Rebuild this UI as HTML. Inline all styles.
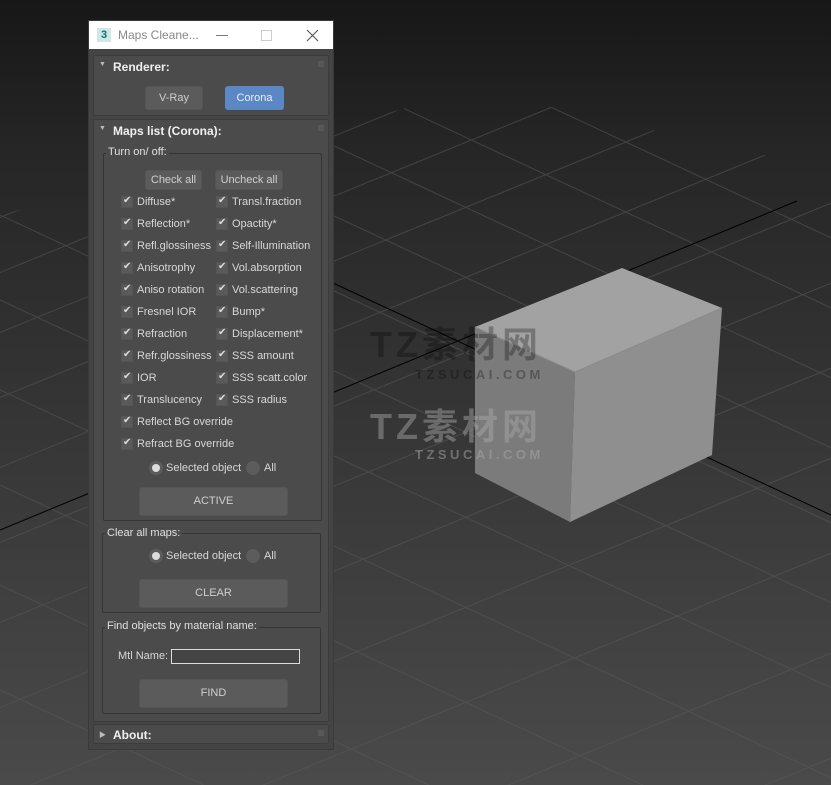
<!DOCTYPE html>
<html style="overflow:hidden"><head><meta charset="utf-8"><style>
*{margin:0;padding:0;box-sizing:border-box}
html,body{width:831px;height:785px;overflow:hidden}
body{position:relative;font-family:"Liberation Sans","Noto Sans CJK SC",sans-serif;font-size:11px;color:#d8d8d8;background:linear-gradient(#171717 0,#262626 150px,#3a3a3a 500px,#4a4a4a 785px)}
.a{position:absolute}
.win{left:88px;top:20px;width:246px;height:730px;background:#444;border:1px solid #3a3a3a}
.title{left:0;top:0;width:244px;height:28px;background:#fff;color:#888;font-size:12px}
.ro{background:#4b4b4b;border:1px solid #3c3c3c;border-radius:2px}
.hd{font-weight:bold;color:#f0f0f0;font-size:12px}
.tri{font-size:7px;color:#bbb}
.dots{width:6px;height:6px;background-image:radial-gradient(#777 0.7px,transparent 0.8px);background-size:2px 2px;}
.grp{border:1px solid #353535;border-radius:2px}
.gl{background:#4b4b4b;padding:0 2px;color:#e0e0e0}
.btn{background:#5b5b5b;border-radius:3px;text-align:center;color:#cfcfcf;border:1px solid #555}
.cb{width:12px;height:12px;background:#5a5a5a;border:1px solid #555}
.cb:after{content:"✔";position:absolute;left:1px;top:-2px;font-size:10px;color:#ddd}
.rad{width:14px;height:14px;border-radius:50%;background:#5c5c5c}
.rad.on:after{content:"";position:absolute;left:3px;top:3px;width:8px;height:8px;border-radius:50%;background:#ddd}
.wm{font-weight:bold;font-size:36px;letter-spacing:4px;white-space:nowrap}
.wm2{font-weight:bold;font-size:13px;letter-spacing:3.5px;white-space:nowrap}
</style></head><body>
<svg class="a" style="left:0;top:0" width="831" height="785">
<defs><clipPath id="c"><polygon points="0,215 475,90 831,170 831,785 0,785"/></clipPath></defs>
<g clip-path="url(#c)" stroke="#5a5a5a" stroke-width="1" opacity="0.55">
<line x1="-300" y1="290" x2="900" y2="-200"/><line x1="-300" y1="340" x2="900" y2="-150"/><line x1="-300" y1="395" x2="900" y2="-95"/><line x1="-300" y1="455" x2="900" y2="-35"/><line x1="-300" y1="520" x2="900" y2="30"/><line x1="-300" y1="590" x2="900" y2="100"/><line x1="-300" y1="665" x2="900" y2="175"/><line x1="-300" y1="745" x2="900" y2="255"/><line x1="-300" y1="830" x2="900" y2="340"/><line x1="-300" y1="920" x2="900" y2="430"/><line x1="-300" y1="1015" x2="900" y2="525"/><line x1="-300" y1="1115" x2="900" y2="625"/><line x1="-300" y1="1220" x2="900" y2="730"/>
<line x1="0" y1="-150" x2="900" y2="270"/><line x1="0" y1="-80" x2="900" y2="340"/><line x1="0" y1="-10" x2="900" y2="410"/><line x1="0" y1="60" x2="900" y2="480"/><line x1="0" y1="135" x2="900" y2="555"/><line x1="0" y1="215" x2="900" y2="635"/><line x1="0" y1="300" x2="900" y2="720"/><line x1="0" y1="390" x2="900" y2="810"/><line x1="0" y1="485" x2="900" y2="905"/><line x1="0" y1="585" x2="900" y2="1005"/><line x1="0" y1="690" x2="900" y2="1110"/><line x1="0" y1="800" x2="900" y2="1220"/>
</g>
<line x1="0" y1="530" x2="797" y2="201" stroke="#000" stroke-width="1"/>
<line x1="333" y1="283" x2="831" y2="515" stroke="#000" stroke-width="1"/>
<polygon points="622,268 722,308 575,372 475,327" fill="#a2a2a2"/>
<polygon points="475,327 575,372 570,522 475,473" fill="#7b7b7b"/>
<polygon points="575,372 722,308 712,455 570,522" fill="#8f8f8f"/>
<polyline points="475,327 575,372 722,308" fill="none" stroke="#8a8a8a" stroke-width="1"/>
</svg>
<div class="a wm" style="left:370px;top:316px;color:rgba(0,0,0,0.28)">TZ素材网</div>
<div class="a wm2" style="left:415px;top:367px;color:rgba(0,0,0,0.3)">TZSUCAI.COM</div>
<div class="a wm" style="left:370px;top:398px;color:rgba(170,170,170,0.45)">TZ素材网</div>
<div class="a wm2" style="left:415px;top:447px;color:rgba(170,170,170,0.5)">TZSUCAI.COM</div>

<div class="a win">
 <div class="a title">
  <div class="a" style="left:8px;top:7px;width:14px;height:14px;background:#cde8e6;color:#156b73;font-weight:bold;font-size:11px;text-align:center;line-height:14px">3</div>
  <div class="a" style="left:29px;top:7px">Maps Cleane...</div>
  <svg class="a" style="left:120px;top:6px" width="120" height="16">
   <line x1="7" y1="8.5" x2="19" y2="8.5" stroke="#777" stroke-width="1"/>
   <rect x="52.5" y="3.5" width="10" height="10" fill="none" stroke="#ccc"/>
   <path d="M98 3L109 14M109 3L98 14" stroke="#555" stroke-width="1.1"/>
  </svg>
 </div>
 <div class="a ro" style="left:4px;top:34px;width:236px;height:61px">
  <div class="a tri" style="left:5px;top:5px">▼</div>
  <div class="a hd" style="left:19px;top:4px">Renderer:</div>
  <div class="a dots" style="left:224px;top:5px"></div>
  <div class="a btn" style="left:51px;top:30px;width:58px;height:24px;line-height:22px">V-Ray</div>
  <div class="a btn" style="left:131px;top:30px;width:59px;height:24px;line-height:22px;background:#5b87c4;border-color:#5b87c4;color:#e8eef8">Corona</div>
 </div>
 <div class="a ro" style="left:4px;top:98px;width:236px;height:603px">
  <div class="a tri" style="left:5px;top:5px">▼</div>
  <div class="a hd" style="left:19px;top:4px">Maps list (Corona):</div>
  <div class="a dots" style="left:224px;top:5px"></div>
  <div class="a grp" style="left:9px;top:33px;width:219px;height:368px"></div>
  <div class="a gl" style="left:12px;top:26px">Turn on/ off:</div>
  <div class="a btn" style="left:51px;top:50px;width:57px;height:20px;line-height:18px">Check all</div>
  <div class="a btn" style="left:121px;top:50px;width:68px;height:20px;line-height:18px">Uncheck all</div>
 </div>
 <div id="rows"></div>
 <div class="a rad on" style="left:60px;top:440px"></div><div class="a" style="left:77px;top:441px">Selected object</div>
 <div class="a rad" style="left:157px;top:440px"></div><div class="a" style="left:175px;top:441px">All</div>
 <div class="a btn" style="left:50px;top:466px;width:149px;height:29px;line-height:27px;font-size:11px">ACTIVE</div>
 <div class="a grp" style="left:13px;top:512px;width:219px;height:80px"></div>
 <div class="a gl" style="left:16px;top:506px">Clear all maps:</div>
 <div class="a rad on" style="left:60px;top:528px"></div><div class="a" style="left:77px;top:529px">Selected object</div>
 <div class="a rad" style="left:157px;top:528px"></div><div class="a" style="left:175px;top:529px">All</div>
 <div class="a btn" style="left:50px;top:558px;width:149px;height:29px;line-height:27px;font-size:11px">CLEAR</div>
 <div class="a grp" style="left:13px;top:606px;width:219px;height:87px"></div>
 <div class="a gl" style="left:16px;top:599px">Find objects by material name:</div>
 <div class="a" style="left:29px;top:629px">Mtl Name:</div>
 <div class="a" style="left:82px;top:628px;width:129px;height:15px;border:1px solid #ddd;background:#444"></div>
 <div class="a btn" style="left:50px;top:658px;width:149px;height:29px;line-height:27px;font-size:11px">FIND</div>
 <div class="a ro" style="left:4px;top:703px;width:236px;height:20px">
  <div class="a tri" style="left:5px;top:5px">▶</div>
  <div class="a hd" style="left:19px;top:3px">About:</div>
  <div class="a dots" style="left:224px;top:5px"></div>
 </div>
</div>
<script>
var L=["Diffuse*","Reflection*","Refl.glossiness","Anisotrophy","Aniso rotation","Fresnel IOR","Refraction","Refr.glossiness","IOR","Translucency","Reflect BG override","Refract BG override"];
var R=["Transl.fraction","Opactity*","Self-Illumination","Vol.absorption","Vol.scattering","Bump*","Displacement*","SSS amount","SSS scatt.color","SSS radius"];
var h="";
for(var i=0;i<L.length;i++){var y=174+i*22;h+='<div class="a cb" style="left:32px;top:'+(y+1)+'px"></div><div class="a" style="left:48px;top:'+(y+1)+'px">'+L[i]+'</div>';}
for(var i=0;i<R.length;i++){var y=174+i*22;h+='<div class="a cb" style="left:127px;top:'+(y+1)+'px"></div><div class="a" style="left:143px;top:'+(y+1)+'px">'+R[i]+'</div>';}
document.getElementById("rows").outerHTML=h;
</script>
</body></html>
